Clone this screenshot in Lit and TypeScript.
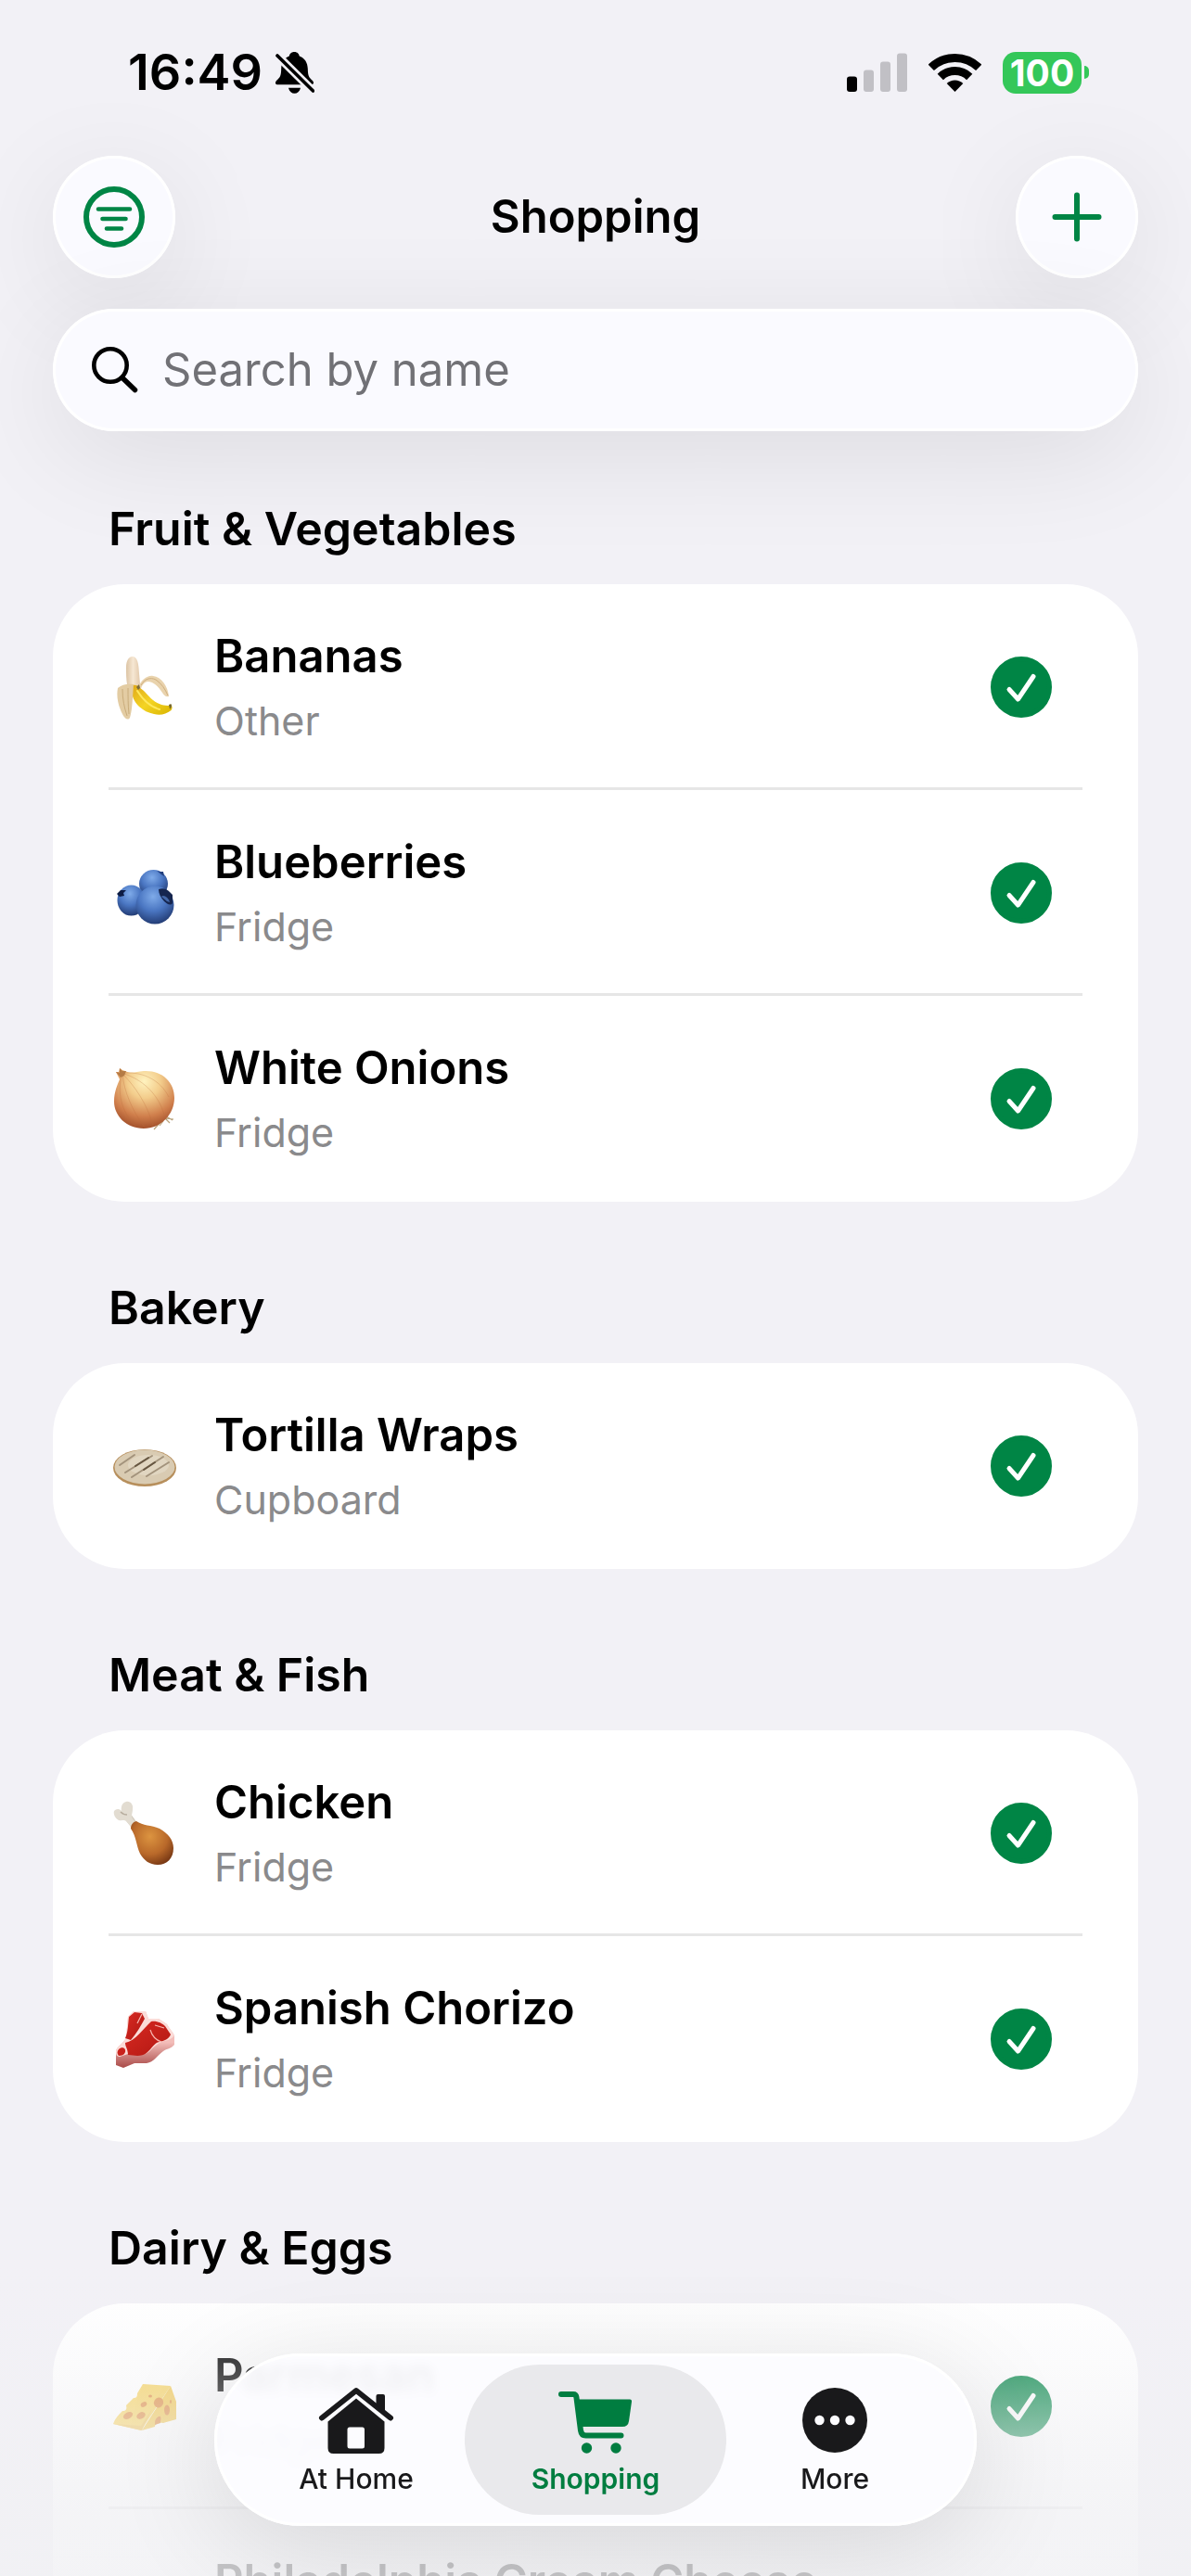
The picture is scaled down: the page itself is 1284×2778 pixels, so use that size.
import { LitElement, html, css, svg, type TemplateResult } from "lit";
import { customElement, property, state } from "lit/decorators.js";
import { classMap } from "lit/directives/class-map.js";

interface Item {
  name: string;
  place: string;
  icon: string;
}

interface Section {
  title: string;
  items: Item[];
}

const SECTIONS: Section[] = [
  {
    title: "Fruit & Vegetables",
    items: [
      { name: "Bananas", place: "Other", icon: "banana" },
      { name: "Blueberries", place: "Fridge", icon: "blueberries" },
      { name: "White Onions", place: "Fridge", icon: "onion" },
    ],
  },
  {
    title: "Bakery",
    items: [{ name: "Tortilla Wraps", place: "Cupboard", icon: "flatbread" }],
  },
  {
    title: "Meat & Fish",
    items: [
      { name: "Chicken", place: "Fridge", icon: "drumstick" },
      { name: "Spanish Chorizo", place: "Fridge", icon: "steak" },
    ],
  },
  {
    title: "Dairy & Eggs",
    items: [
      { name: "Parmesan", place: "Fridge", icon: "cheese" },
      { name: "Philadelphia Cream Cheese", place: "Fridge", icon: "cheese" },
    ],
  },
];

const FOOD: Record<string, TemplateResult> = {
  banana: svg`
    <defs>
      <linearGradient id="bn-skin" x1="0" y1="0" x2="1" y2="1">
        <stop offset="0" stop-color="#dfa81a" /><stop offset=".5" stop-color="#f4d424" /><stop offset="1" stop-color="#d9b400" />
      </linearGradient>
      <linearGradient id="bn-flesh" x1="0" y1="0" x2="1" y2="0">
        <stop offset="0" stop-color="#dcc4a4" /><stop offset=".5" stop-color="#f6e7d3" /><stop offset="1" stop-color="#e2c9ab" />
      </linearGradient>
    </defs>
    <path d="M19 18C19 10 22 6 26 6c4 0 6 5 6.500 12L34 36l-5 6-9-6c-1-6-1-12-1-18Z" fill="url(#bn-flesh)" />
    <path d="M32 40C35 31 42 26 48 27c9 1 16 11 17 22-3 1-5-1-7-4-4-6-9-12-16-12-4 1-6 4-7 8Z" fill="#e9d3ad" />
    <path d="M35 37c4-7 10-9 16-6 6 4 10 10 13 17" fill="none" stroke="#cfae7e" stroke-width="1" />
    <path d="M26 37c3-1 6 0 8 3 5 3 8 8 14 13 6 5 12 6 19 6 2 0 2 3 .5 5C62 68 56 70 49 68 38 66 28 58 25.500 47Z" fill="url(#bn-skin)" />
    <path d="M31 43c5 8 13 17 24 20" fill="none" stroke="#ffe95c" stroke-width="2" stroke-linecap="round" />
    <path d="M65 58c2-1 3-1 3 1s-1 3-2 3.500Z" fill="#77682a" />
    <path d="M10 40c4-4 11-5 17-4-1 12-1 26-4 36-2 3-5 1-7-2-5-9-8-20-6-30Z" fill="#e3cca3" />
    <path d="M15 41c0 11 2 20 5 29M21 40c0 9 0 18 1 28" fill="none" stroke="#c9ac7b" stroke-width="1" />
    <path d="m30 39 3-3 1 4-2 2Z" fill="#7a6a3a" />`,
  blueberries: svg`
    <defs>
      <radialGradient id="bb-a" cx=".45" cy=".28" r=".75">
        <stop offset="0" stop-color="#7fabe9" /><stop offset=".5" stop-color="#4a76c2" /><stop offset="1" stop-color="#20386f" />
      </radialGradient>
    </defs>
    <ellipse cx="48.500" cy="29" rx="15.500" ry="15" fill="url(#bb-a)" />
    <path d="m52 15 3 1 4 0 1 5-3-2Z" fill="#23407f" />
    <ellipse cx="24.500" cy="47" rx="15" ry="16.500" fill="url(#bb-a)" />
    <path d="m9 40 4-4 6 0-3 3 1 3-5 1Z" fill="#0d1c44" />
    <circle cx="50" cy="52" r="20.500" fill="url(#bb-a)" />
    <path d="M54 35c5-2 9 0 12 3l3 3v9c-2 3-6 1-9-2-4-4-6-9-6-13Z" fill="#16264f" />
    <path d="M57 43c2-3 8 1 9 6l-3-1Z" fill="#4468a8" />`,
  onion: svg`
    <defs>
      <radialGradient id="on-a" cx=".5" cy=".22" r=".85">
        <stop offset="0" stop-color="#fff3bf" /><stop offset=".32" stop-color="#f3cd8c" />
        <stop offset=".68" stop-color="#d07f4c" /><stop offset="1" stop-color="#93401f" />
      </radialGradient>
    </defs>
    <path d="m62 58 7 4m-8-2 5 5m-9-2-8 9m10-9-4 5m6-8 9 1" fill="none" stroke="#b9a27a" stroke-width="1.200" />
    <path d="M8 10l3 0 1-4 3 2 3 1c6 3 11 1 20 0 20-1 33 12 33 29 0 18-15 33-33 33C19 71 6 57 6 42 6 31 10 23 12 18Z" fill="url(#on-a)" />
    <path d="M14 14C10 30 12 52 30 69M15 13c2 18 10 38 24 57M16 13c12 12 26 32 32 55M17 12c18 6 36 20 43 44M18 11c20-1 38 8 47 26" fill="none" stroke="#b96c3a" stroke-width="1" opacity=".28" />
    <path d="m8 10 4 1 0-5 3 3 4 0-2 5-4 2Z" fill="#b57b45" />`,
  flatbread: svg`
    <ellipse cx="39" cy="41" rx="34" ry="20" fill="#b78f5c" />
    <ellipse cx="39" cy="40" rx="32.500" ry="18.500" fill="#d9cbb2" />
    <ellipse cx="43" cy="38" rx="22" ry="11" fill="#e1d6c1" />
    <g fill="none" stroke-linecap="round">
      <path d="M12 38 28 27M18 46 47 28M25 51 59 29M41 50 65 35" stroke="#a3937c" stroke-width="2" />
      <path d="m29 39 14-9M38 43l12-8" stroke="#665641" stroke-width="2" />
    </g>`,
  drumstick: svg`
    <defs>
      <radialGradient id="dr-a" cx=".45" cy=".35" r=".75">
        <stop offset="0" stop-color="#dc9440" /><stop offset=".55" stop-color="#b9692a" /><stop offset="1" stop-color="#6c2f10" />
      </radialGradient>
    </defs>
    <path d="m17 23 6-6 8 11-6 5Z" fill="#cfc7ba" />
    <path d="M6 15c2-2 5-3 8 0-1-5 1-9 5-10 5-1 8 4 7 8 0 5-2 6 0 10l4 5-6 4-5-6c-3-2-4 0-8-1-4-2-6-7-5-10Z" fill="#e2dcd1" />
    <path d="M13 16c2 2 4 3 7 3" fill="none" stroke="#b7ad9e" stroke-width="1.500" />
    <path d="M24 34c0-4 2-7 6-8 7 5 16 4 25 8 9 5 15 12 15 21 0 11-7 18-17 18-9 0-15-5-19-12-4-8-4-19-10-27Z" fill="url(#dr-a)" />`,
  steak: svg`
    <defs>
      <linearGradient id="st-a" x1="0" y1="0" x2="1" y2="1">
        <stop offset="0" stop-color="#d92a22" /><stop offset="1" stop-color="#b01712" />
      </linearGradient>
      <linearGradient id="st-b" x1="0" y1="0" x2="0" y2="1">
        <stop offset=".55" stop-color="#f3bdb9" /><stop offset="1" stop-color="#a94a48" />
      </linearGradient>
    </defs>
    <path d="M8 52c0-4 9-9 11-15l2-22 6-6h13l3 8 11 0 9 6c2 4 6 8 8 12v10c-4 5-8 4-12 7-7 5-10 12-18 13l-13 0-12 5-8-3Z" fill="url(#st-b)" />
    <path d="M8 52c0-4 9-9 11-15l2-22 6-6h13l3 8 11 0 9 6c2 4 6 8 8 12-5 7-12 4-19 10-7 5-9 11-17 11l-14-1-9 3c-4 0-4-4-4-6Z" fill="#fbdcd8" />
    <path d="m22 15 6-5 8 1 3 6c-4 7-8 15-15 23l-6-2c3-6 3-15 4-23Z" fill="url(#st-a)" />
    <path d="M46 20c6-1 12 2 15 5l6 9c-2 5-7 7-12 8-6 1-8 7-14 12-5 4-12 3-20 2 0-6-3-9-3-13 11-2 19-15 28-23Z" fill="url(#st-a)" />
    <path d="M11 50c3-3 8-2 7 3-1 3-4 4-7 4-2-2-2-5 0-7Z" fill="#c9231d" />
    <path d="m36 12-5 10M45 29c2 7 6 11 12 13M50 24l10 3" fill="none" stroke="#f7b5ae" stroke-width="1.200" />`,
  cheese: svg`
    <path d="M5 58c2-6 6-10 10-14 4 0 5-2 4-6l8-8c3 0 4-1 4-5l6-10 30 2-12 18-20 30Z" fill="#f7d25c" />
    <path d="m67 17 6 17v19c-4 1-10 3-14 4-5-1-9 1-9 4l-14 4Z" fill="#f3c84c" />
    <path d="m5 58 30 2 12-18-11 23Z" fill="#eec254" />
    <g fill="#de8838">
      <ellipse cx="21" cy="49" rx="5.500" ry="3.500" transform="rotate(-28 21 49)" />
      <ellipse cx="35" cy="49" rx="5" ry="3.500" transform="rotate(-28 35 49)" />
      <ellipse cx="38" cy="37" rx="3.500" ry="2.500" transform="rotate(-28 38 37)" />
      <ellipse cx="45" cy="28" rx="2" ry="1.500" />
      <ellipse cx="54" cy="35" rx="5" ry="5.500" transform="rotate(30 54 35)" />
      <ellipse cx="63" cy="43" rx="3" ry="5.500" />
      <ellipse cx="67" cy="34" rx="1" ry="2" />
      <path d="M50 57c0-5 4-8 6-7 1 2 0 5 0 7l-6 2Z" />
    </g>`,
};

@customElement("shopping-row")
class ShoppingRow extends LitElement {
  @property({ attribute: false }) item!: Item;

  static styles = css`
    :host {
      display: flex;
      align-items: center;
      gap: 36px;
      min-height: 222px;
      box-sizing: border-box;
      padding-right: 33px;
    }
    .food {
      flex: none;
      width: 78px;
      height: 78px;
    }
    .text {
      flex: 1;
      min-width: 0;
      display: grid;
      gap: 12px;
    }
    .name {
      font-size: 49px;
      line-height: 60px;
      font-weight: 600;
      color: #000;
      white-space: nowrap;
    }
    .place {
      font-size: 43px;
      line-height: 54px;
      color: #8a8a8c;
    }
    .check {
      flex: none;
      display: grid;
      width: 66px;
      height: 66px;
    }
    .box,
    .tick {
      grid-area: 1 / 1;
      width: 66px;
      height: 66px;
      margin: 0;
    }
    .box {
      appearance: none;
      border-radius: 50%;
      border: 5px solid #008545;
      cursor: pointer;
    }
    .box:checked {
      background: #008545;
    }
    .tick {
      pointer-events: none;
      fill: none;
      stroke: #fff;
      stroke-width: 5;
      stroke-linecap: round;
      stroke-linejoin: round;
    }
  `;

  render() {
    return html`
      <svg class="food" viewBox="0 0 78 78" aria-hidden="true">${FOOD[this.item.icon]}</svg>
      <div class="text">
        <label class="name" for="done">${this.item.name}</label>
        <span class="place">${this.item.place}</span>
      </div>
      <div class="check">
        <input class="box" id="done" type="checkbox" checked />
        <svg class="tick" viewBox="0 0 66 66" aria-hidden="true"><path d="M20 35.500 29.500 46 46 21.500" /></svg>
      </div>
    `;
  }
}

@customElement("status-bar")
class StatusBar extends LitElement {
  static styles = css`
    :host {
      display: flex;
      justify-content: space-between;
      align-items: center;
      box-sizing: border-box;
      height: 168px;
      padding: 0 110px 12px 138px;
    }
    .left,
    .right {
      display: flex;
      align-items: center;
    }
    .left {
      gap: 14px;
    }
    .right {
      gap: 23px;
    }
    .time {
      font-size: 54px;
      line-height: 60px;
      font-weight: 600;
    }
    .power {
      display: flex;
      align-items: center;
      gap: 3px;
    }
    .level {
      width: 85px;
      height: 45px;
      border-radius: 14px;
      background: #34c759;
      color: #fff;
      font-size: 39px;
      line-height: 45px;
      font-weight: 700;
      text-align: center;
    }
    .nub {
      width: 5px;
      height: 14px;
      border-radius: 0 5px 5px 0;
      background: #34c759;
    }
  `;

  render() {
    return html`
      <div class="left">
        <span class="time">16:49</span>
        <svg width="42" height="45" viewBox="0 0 42 45" role="img" aria-label="Silent mode">
          <path d="M20.300 0c3.500 0 5 2.200 5.500 4.600C32 7 34.500 12 34.800 18c.2 8 1.200 9.500 5.200 13 2 2.500 1 4.300-2 4.300H3c-3 0-4-1.800-2-4.300 4-3.500 5-5 5.200-13C6.400 12 9 7 14.800 4.600 15.300 2.200 16.800 0 20.300 0Z" />
          <path d="M14 38.700h13c-1 4-3.500 6-6.500 6s-5.500-2-6.500-6Z" />
          <path d="m2 4 38.500 38" stroke="#f2f1f6" stroke-width="9" />
          <path d="m2 4 38.500 38" stroke="#000" stroke-width="3.600" stroke-linecap="round" />
        </svg>
      </div>
      <div class="right">
        <svg width="65" height="42" viewBox="0 0 65 42" role="img" aria-label="Signal: 1 of 4 bars">
          <rect x="0" y="25.500" width="11" height="16.500" rx="3" />
          <g fill="#c1c0c5">
            <rect x="18" y="18.500" width="11" height="23.500" rx="3" />
            <rect x="36" y="9.500" width="11" height="32.500" rx="3" />
            <rect x="54" y="0.500" width="11" height="41.500" rx="3" />
          </g>
        </svg>
        <svg width="57" height="42" viewBox="0 0 57 42" role="img" aria-label="Wi-Fi">
          <g fill="none" stroke="#000" stroke-width="9">
            <path d="M2.800 15.800a37 37 0 0 1 51.400 0" />
            <path d="M12.800 26a22.500 22.500 0 0 1 31.400 0" />
          </g>
          <path d="m28.500 42-8.800-9a12.500 12.500 0 0 1 17.600 0Z" />
        </svg>
        <div class="power">
          <span class="level">100</span>
          <span class="nub"></span>
        </div>
      </div>
    `;
  }
}

@customElement("tab-bar")
class TabBar extends LitElement {
  @state() private active = "Shopping";

  static styles = css`
    :host {
      display: block;
    }
    .bar {
      display: flex;
      padding: 12px;
      border-radius: 93px;
      background: rgba(252, 252, 255, 0.93);
      backdrop-filter: blur(6px);
      box-shadow: inset 0 0 0 3px #fff, 0 24px 120px rgba(0, 0, 0, 0.12);
    }
    .tab {
      display: flex;
      flex-direction: column;
      align-items: center;
      gap: 9px;
      box-sizing: border-box;
      width: 282px;
      height: 162px;
      padding: 24px 0 21px;
      border-radius: 81px;
      color: #19191b;
      font-size: 30px;
      line-height: 36px;
      font-weight: 500;
      text-decoration: none;
    }
    .tab + .tab {
      margin-left: -24px;
    }
    .tab.active {
      background: #e9e9ec;
      color: #007d40;
      font-weight: 600;
    }
    .icon {
      display: block;
      height: 72px;
      fill: currentColor;
    }
    .line {
      fill: none;
      stroke: currentColor;
      stroke-width: 6;
      stroke-linecap: round;
      stroke-linejoin: round;
    }
    .hole {
      fill: #fcfcff;
    }
  `;

  private tab(label: string, icon: TemplateResult) {
    const active = this.active === label;
    return html`<a
      class=${classMap({ tab: true, active })}
      href="#"
      aria-current=${active ? "page" : "false"}
      @click=${(e: Event) => {
        e.preventDefault();
        this.active = label;
      }}
      >${icon}<span>${label}</span></a
    >`;
  }

  render() {
    return html`<nav class="bar" aria-label="Main">
      ${this.tab(
        "At Home",
        html`<svg class="icon" viewBox="0 0 82 72" aria-hidden="true">
          <path class="line" d="M4 33.500 41 4l37 29.500" />
          <path d="M62.500 10q0-2 2-2H70q2 0 2 2v18l-9.500-8Z" />
          <path d="M10.500 37.500 41 12.500l30.500 25V66q0 6-6 6h-49q-6 0-6-6Z" />
          <rect class="hole" x="31.500" y="43.500" width="18.500" height="23" rx="2.500" />
        </svg>`
      )}
      ${this.tab(
        "Shopping",
        html`<svg class="icon" viewBox="0 0 80 72" aria-hidden="true">
          <path class="line" d="M3 8h13q3 0 3.400 3L24 47q.8 5.500 5.500 5.500H67.500" />
          <path d="M19 13.500h58q2.300 0 2 2.500l-3 21q-.8 6-7 6H23Z" />
          <circle cx="30.500" cy="66" r="5.700" />
          <circle cx="62" cy="66" r="5.700" />
        </svg>`
      )}
      ${this.tab(
        "More",
        html`<svg class="icon" viewBox="0 0 70 72" aria-hidden="true">
          <circle cx="35" cy="36" r="35" />
          <g class="hole">
            <circle cx="18.500" cy="36" r="5.200" />
            <circle cx="35" cy="36" r="5.200" />
            <circle cx="51.500" cy="36" r="5.200" />
          </g>
        </svg>`
      )}
    </nav>`;
  }
}

@customElement("app-root")
class AppRoot extends LitElement {
  static styles = css`
    :host {
      display: block;
      position: relative;
      height: 100vh;
      overflow: hidden;
      background: #f2f1f6;
      color: #000;
      font-family: Inter, "Liberation Sans", sans-serif;
    }
    .top {
      display: flex;
      flex-direction: column;
      gap: 33px;
      padding: 0 57px;
    }
    .bar {
      display: grid;
      grid-template-columns: 132px 1fr 132px;
      align-items: center;
    }
    .title {
      margin: 0;
      text-align: center;
      font-size: 49px;
      line-height: 60px;
      font-weight: 600;
    }
    .glass {
      background: #fafaff;
      box-shadow: inset 0 0 0 3px #fff, 0 24px 120px rgba(0, 0, 0, 0.09);
    }
    .round {
      display: grid;
      place-items: center;
      width: 132px;
      height: 132px;
      padding: 0;
      border: 0;
      border-radius: 50%;
      color: #008545;
      cursor: pointer;
    }
    .stroke {
      fill: none;
      stroke: currentColor;
      stroke-linecap: round;
    }
    .search {
      display: flex;
      align-items: center;
      gap: 26px;
      height: 132px;
      padding: 0 42px;
      border-radius: 66px;
    }
    .field {
      flex: 1;
      min-width: 0;
      padding: 0;
      border: 0;
      outline: 0;
      background: none;
      color: #000;
      font: inherit;
      font-size: 49px;
      line-height: 60px;
    }
    .field::placeholder {
      color: #717176;
      opacity: 1;
    }
    .list {
      display: flex;
      flex-direction: column;
      gap: 84px;
      padding: 75px 57px 0;
    }
    .heading {
      margin: 0 60px 30px;
      font-size: 50px;
      line-height: 60px;
      font-weight: 600;
    }
    .card {
      margin: 0;
      padding: 0 60px;
      list-style: none;
      border-radius: 78px;
      background: #fff;
    }
    .row:not(:last-child) {
      box-shadow: inset 0 -3px #e6e6e6;
    }
    .fade {
      position: absolute;
      left: 0;
      right: 0;
      bottom: 0;
      height: 340px;
      pointer-events: none;
      background: linear-gradient(
        rgba(241, 241, 244, 0) 0,
        rgba(241, 241, 244, 0.08) 46px,
        rgba(241, 241, 244, 0.28) 110px,
        rgba(241, 241, 244, 0.6) 190px,
        rgba(241, 241, 244, 0.78) 270px,
        rgba(241, 241, 244, 0.82) 340px
      );
    }
    .dock {
      position: absolute;
      left: 0;
      right: 0;
      bottom: 54px;
      display: flex;
      justify-content: center;
    }
  `;

  render() {
    return html`
      <status-bar></status-bar>
      <header class="top">
        <div class="bar">
          <button class="round glass" type="button" aria-label="Filter">
            <svg class="stroke" width="66" height="66" viewBox="0 0 66 66">
              <circle cx="33" cy="33" r="30" stroke-width="6" />
              <path d="M16 24.500h34M20.500 35h25M25 45.500h16" stroke-width="4.600" />
            </svg>
          </button>
          <h1 class="title">Shopping</h1>
          <button class="round glass" type="button" aria-label="Add">
            <svg class="stroke" width="54" height="54" viewBox="0 0 54 54">
              <path d="M27 3.500v47M3.500 27h47" stroke-width="6" />
            </svg>
          </button>
        </div>
        <div class="search glass">
          <svg class="stroke" width="50" height="50" viewBox="0 0 50 50" aria-hidden="true">
            <circle cx="20" cy="20" r="17.700" stroke-width="4.600" />
            <path d="m33 33.500 13.500 13" stroke-width="5.500" />
          </svg>
          <input class="field" type="search" placeholder="Search by name" aria-label="Search by name" />
        </div>
      </header>
      <main class="list">
        ${SECTIONS.map(
          (section) => html`<section>
            <h2 class="heading">${section.title}</h2>
            <ul class="card">
              ${section.items.map(
                (item) => html`<li class="row"><shopping-row .item=${item}></shopping-row></li>`
              )}
            </ul>
          </section>`
        )}
      </main>
      <div class="fade"></div>
      <div class="dock"><tab-bar></tab-bar></div>
    `;
  }
}
